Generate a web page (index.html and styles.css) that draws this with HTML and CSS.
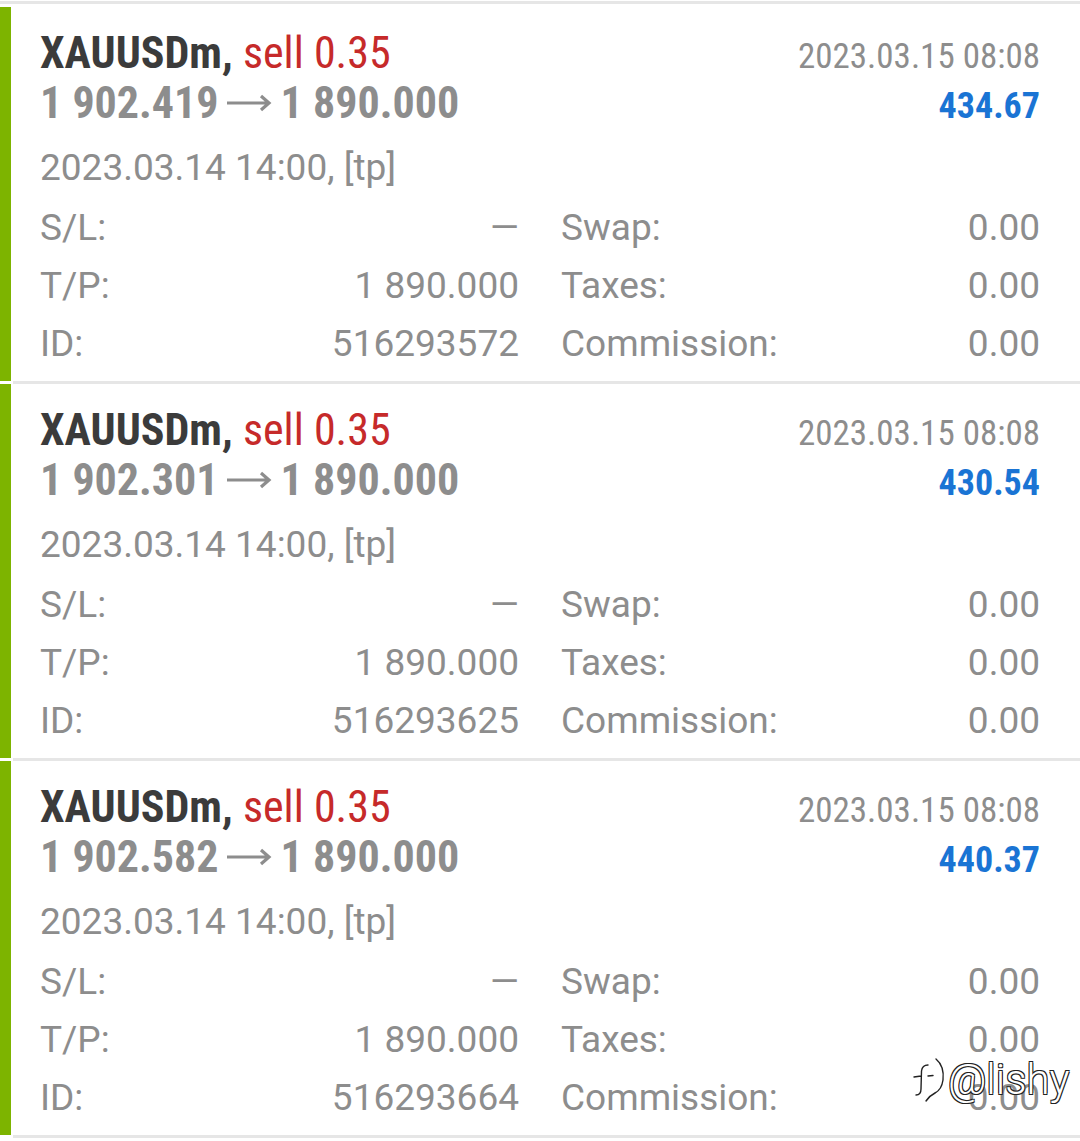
FILE: index.html
```html
<!DOCTYPE html>
<html lang="en">
<head>
    <meta charset="UTF-8">
    <meta name="viewport" content="width=device-width, initial-scale=1.0">
    <title>History</title>
    <link rel="stylesheet" href="styles.css">
</head>
<body>

    <div class="list">

        <div class="deal">
            <div class="bar"></div>
            <div class="deal-body">
                <div class="deal-head">
                    <div class="title">XAUUSDm, <span class="sell">sell 0.35</span></div>
                    <div class="time">2023.03.15 08:08</div>
                    <div class="price">1 902.419<svg class="arrow" viewBox="0 0 46 18" width="46" height="18"><path d="M1 9 H43 M35 2 L43 9 L35 16" /></svg>1 890.000</div>
                    <div class="profit">434.67</div>
                </div>
                <div class="open">2023.03.14 14:00, [tp]</div>
                <div class="details">
                    <div class="row"><span>S/L:</span><span>&mdash;</span></div>
                    <div class="row"><span>Swap:</span><span>0.00</span></div>
                    <div class="row"><span>T/P:</span><span>1 890.000</span></div>
                    <div class="row"><span>Taxes:</span><span>0.00</span></div>
                    <div class="row"><span>ID:</span><span>516293572</span></div>
                    <div class="row"><span>Commission:</span><span>0.00</span></div>
                </div>
            </div>
        </div>

        <div class="deal">
            <div class="bar"></div>
            <div class="deal-body">
                <div class="deal-head">
                    <div class="title">XAUUSDm, <span class="sell">sell 0.35</span></div>
                    <div class="time">2023.03.15 08:08</div>
                    <div class="price">1 902.301<svg class="arrow" viewBox="0 0 46 18" width="46" height="18"><path d="M1 9 H43 M35 2 L43 9 L35 16" /></svg>1 890.000</div>
                    <div class="profit">430.54</div>
                </div>
                <div class="open">2023.03.14 14:00, [tp]</div>
                <div class="details">
                    <div class="row"><span>S/L:</span><span>&mdash;</span></div>
                    <div class="row"><span>Swap:</span><span>0.00</span></div>
                    <div class="row"><span>T/P:</span><span>1 890.000</span></div>
                    <div class="row"><span>Taxes:</span><span>0.00</span></div>
                    <div class="row"><span>ID:</span><span>516293625</span></div>
                    <div class="row"><span>Commission:</span><span>0.00</span></div>
                </div>
            </div>
        </div>

        <div class="deal">
            <div class="bar"></div>
            <div class="deal-body">
                <div class="deal-head">
                    <div class="title">XAUUSDm, <span class="sell">sell 0.35</span></div>
                    <div class="time">2023.03.15 08:08</div>
                    <div class="price">1 902.582<svg class="arrow" viewBox="0 0 46 18" width="46" height="18"><path d="M1 9 H43 M35 2 L43 9 L35 16" /></svg>1 890.000</div>
                    <div class="profit">440.37</div>
                </div>
                <div class="open">2023.03.14 14:00, [tp]</div>
                <div class="details">
                    <div class="row"><span>S/L:</span><span>&mdash;</span></div>
                    <div class="row"><span>Swap:</span><span>0.00</span></div>
                    <div class="row"><span>T/P:</span><span>1 890.000</span></div>
                    <div class="row"><span>Taxes:</span><span>0.00</span></div>
                    <div class="row"><span>ID:</span><span>516293664</span></div>
                    <div class="row"><span>Commission:</span><span>0.00</span></div>
                </div>
            </div>
        </div>

    </div>

    <!-- watermark -->
    <div class="watermark">
        <svg class="wm-icon" viewBox="0 0 36 50" width="36" height="50">
            <path d="M18 11 C14 11 12 13 11.5 17 L11 35 C11 39 9 41 6 41 M4 23 L11 22 M18 22 L23 21.5 M26 5 C32 10 34 17 33 26 C32 33 29 37 25 39 C21 41 18 44 16 47" />
        </svg>
        <span>@lishy</span>
    </div>

</body>
</html>
```

FILE: styles.css
```css
html, body {
    margin: 0;
    padding: 0;
    background: #fff;
    font-family: Roboto, "Liberation Sans", sans-serif;
}

body {
    position: relative;
    width: 1080px;
    height: 1141px;
    overflow: hidden;
}

.list {
    margin-top: 1px;
    border-top: 3px solid #e6e6e6;
}

.deal {
    display: flex;
}

.deal:first-child {
    padding-top: 3px;
}

.bar {
    width: 11px;
    flex-shrink: 0;
    background-color: #7db400;
    margin-bottom: 3px; /* biała przerwa przy separatorze */
}

.deal-body {
    flex: 1;
    margin-left: 2px;
    padding: 21px 40px 8px 27px;
    border-bottom: 3px solid #e6e6e6;
}

.deal-head {
    display: grid;
    grid-template-columns: 1fr auto;
    grid-template-rows: 50px 50px;
    align-items: baseline;
    font-family: "Roboto Condensed", Roboto, sans-serif;
    white-space: nowrap;
}

.title, .price {
    font-size: 44px;
    line-height: 50px;
    font-weight: bold;
}

.title {
    color: #3b3b3b;
}

.sell {
    color: #c62a2a;
    font-weight: normal;
}

.price {
    color: #8d8d8d;
}

.arrow {
    margin: 0 9px 0 7px;
    vertical-align: 6px;
    fill: none;
    stroke: #8d8d8d;
    stroke-width: 3.2;
}

.time, .profit {
    line-height: 50px;
    text-align: right;
}

.time {
    font-size: 35px;
    color: #8d8d8d;
}

.profit {
    font-size: 36px;
    color: #1a74d4;
    font-weight: bold;
}

.open {
    margin-top: 13px;
    margin-bottom: 4px;
    font-size: 37px;
    line-height: 54px;
    color: #8d8d8d;
}

.details {
    display: grid;
    grid-template-columns: 1fr 1fr;
    column-gap: 42px;
}

.row {
    display: flex;
    justify-content: space-between;
    font-size: 37px;
    line-height: 58px;
    color: #8d8d8d;
}

.watermark {
    position: absolute;
    left: 910px;
    top: 1054px;
    display: flex;
    align-items: center;
    gap: 2px;
    font-size: 42px;
    font-weight: 300;
    color: #fff;
    text-shadow: -1px -1px 0 #222, 1px -1px 0 #222, -1px 1px 0 #222, 1px 1px 0 #222;
}

.wm-icon {
    fill: none;
    stroke: #222;
    stroke-width: 1.4;
    stroke-linecap: round;
}
```
